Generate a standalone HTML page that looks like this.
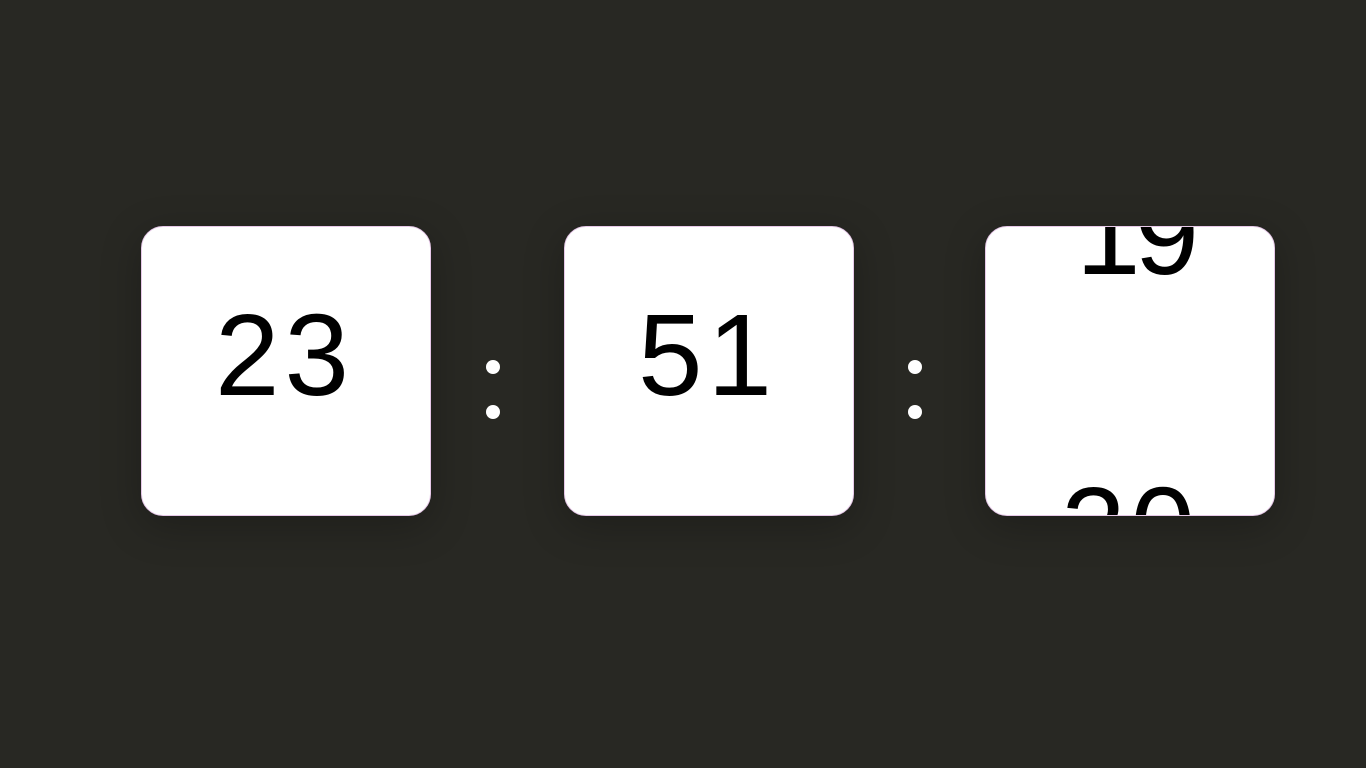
<!DOCTYPE html>
<html><head><style>
html,body{margin:0;padding:0;background:#282823;width:1366px;height:768px;overflow:hidden;font-family:"Liberation Sans",Arial,sans-serif}
.box{position:absolute;top:226px;width:288px;height:288px;background:#fff;border:1px solid #e6c8e8;border-radius:22px;overflow:hidden;box-shadow:0 10px 40px rgba(0,0,0,.25)}
.d{position:absolute;left:0;width:288px;text-align:center;font-size:116px;line-height:116px;color:#000;letter-spacing:5px;text-indent:3px}
.dot{position:absolute;width:14px;height:14px;border-radius:50%;background:#fff}
</style></head><body>
<div class="box" style="left:141px"><div class="d" style="top:70px;left:-3px">23</div></div>
<div class="box" style="left:564px"><div class="d" style="top:70px;left:-3px">51</div></div>
<div class="box" style="left:985px"><div class="d" style="top:-51px;left:3px;letter-spacing:-6px">19</div><div class="d" style="top:243px;left:-1px">20</div></div>
<div class="dot" style="left:486px;top:360px"></div>
<div class="dot" style="left:486px;top:405px"></div>
<div class="dot" style="left:908px;top:360px"></div>
<div class="dot" style="left:908px;top:405px"></div>
</body></html>
